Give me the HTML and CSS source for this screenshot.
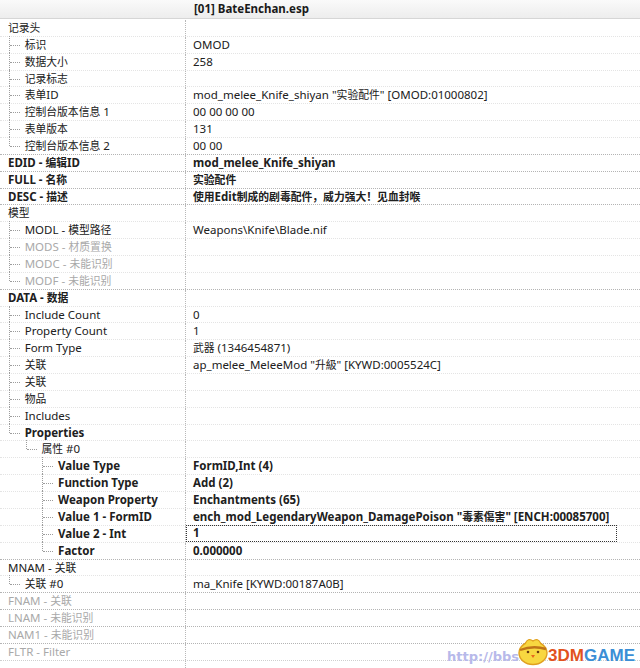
FILE: index.html
```html
<!DOCTYPE html>
<html>
<head>
<meta charset="utf-8">
<link rel="stylesheet" href="styles.css">
</head>
<body>
<div class="tree">
  <div class="hdr"><div class="hc"></div><div class="hc hv">[01] BateEnchan.esp</div></div>

  <div class="row"><div class="c"><span class="lbl"><span class="zh">记录头</span></span></div><div class="v"></div></div>
  <div class="row"><div class="c"><span class="g t"></span><span class="lbl"><span class="zh">标识</span></span></div><div class="v">OMOD</div></div>
  <div class="row"><div class="c"><span class="g t"></span><span class="lbl"><span class="zh">数据大小</span></span></div><div class="v">258</div></div>
  <div class="row"><div class="c"><span class="g t"></span><span class="lbl"><span class="zh">记录标志</span></span></div><div class="v"></div></div>
  <div class="row"><div class="c"><span class="g t"></span><span class="lbl"><span class="zh">表单</span>ID</span></div><div class="v">mod_melee_Knife_shiyan "<span class="zh">实验配件</span>" [OMOD:01000802]</div></div>
  <div class="row"><div class="c"><span class="g t"></span><span class="lbl"><span class="zh">控制台版本信息</span> 1</span></div><div class="v">00 00 00 00</div></div>
  <div class="row"><div class="c"><span class="g t"></span><span class="lbl"><span class="zh">表单版本</span></span></div><div class="v">131</div></div>
  <div class="row"><div class="c"><span class="g e"></span><span class="lbl"><span class="zh">控制台版本信息</span> 2</span></div><div class="v">00 00</div></div>

  <div class="row top b"><div class="c"><span class="lbl">EDID - <span class="zh">编辑</span>ID</span></div><div class="v">mod_melee_Knife_shiyan</div></div>
  <div class="row top b"><div class="c"><span class="lbl">FULL - <span class="zh">名称</span></span></div><div class="v"><span class="zh">实验配件</span></div></div>
  <div class="row top b"><div class="c"><span class="lbl">DESC - <span class="zh">描述</span></span></div><div class="v"><span class="zh">使用</span>Edit<span class="zh">制成的剧毒配件，威力强大！见血封喉</span></div></div>

  <div class="row top"><div class="c"><span class="lbl"><span class="zh">模型</span></span></div><div class="v"></div></div>
  <div class="row"><div class="c"><span class="g t"></span><span class="lbl">MODL - <span class="zh">模型路径</span></span></div><div class="v">Weapons\Knife\Blade.nif</div></div>
  <div class="row dim"><div class="c"><span class="g t"></span><span class="lbl">MODS - <span class="zh">材质置换</span></span></div><div class="v"></div></div>
  <div class="row dim"><div class="c"><span class="g t"></span><span class="lbl">MODC - <span class="zh">未能识别</span></span></div><div class="v"></div></div>
  <div class="row dim"><div class="c"><span class="g e"></span><span class="lbl">MODF - <span class="zh">未能识别</span></span></div><div class="v"></div></div>

  <div class="row top"><div class="c"><span class="lbl bl">DATA - <span class="zh">数据</span></span></div><div class="v"></div></div>
  <div class="row"><div class="c"><span class="g t"></span><span class="lbl">Include Count</span></div><div class="v">0</div></div>
  <div class="row"><div class="c"><span class="g t"></span><span class="lbl">Property Count</span></div><div class="v">1</div></div>
  <div class="row"><div class="c"><span class="g t"></span><span class="lbl">Form Type</span></div><div class="v"><span class="zh">武器</span>&nbsp;(1346454871)</div></div>
  <div class="row"><div class="c"><span class="g t"></span><span class="lbl"><span class="zh">关联</span></span></div><div class="v">ap_melee_MeleeMod "<span class="zh">升級</span>" [KYWD:0005524C]</div></div>
  <div class="row"><div class="c"><span class="g t"></span><span class="lbl"><span class="zh">关联</span></span></div><div class="v"></div></div>
  <div class="row"><div class="c"><span class="g t"></span><span class="lbl"><span class="zh">物品</span></span></div><div class="v"></div></div>
  <div class="row"><div class="c"><span class="g t"></span><span class="lbl">Includes</span></div><div class="v"></div></div>
  <div class="row"><div class="c"><span class="g e"></span><span class="lbl bl">Properties</span></div><div class="v"></div></div>
  <div class="row"><div class="c"><span class="g"></span><span class="g e"></span><span class="lbl"><span class="zh">属性</span> #0</span></div><div class="v"></div></div>
  <div class="row b"><div class="c"><span class="g"></span><span class="g"></span><span class="g t"></span><span class="lbl">Value Type</span></div><div class="v">FormID,Int (4)</div></div>
  <div class="row b"><div class="c"><span class="g"></span><span class="g"></span><span class="g t"></span><span class="lbl">Function Type</span></div><div class="v">Add (2)</div></div>
  <div class="row b"><div class="c"><span class="g"></span><span class="g"></span><span class="g t"></span><span class="lbl">Weapon Property</span></div><div class="v">Enchantments (65)</div></div>
  <div class="row b"><div class="c"><span class="g"></span><span class="g"></span><span class="g t"></span><span class="lbl">Value 1 - FormID</span></div><div class="v">ench_mod_LegendaryWeapon_DamagePoison "<span class="zh">毒素傷害</span>" [ENCH:00085700]</div></div>
  <div class="row b"><div class="c"><span class="g"></span><span class="g"></span><span class="g t"></span><span class="lbl">Value 2 - Int</span></div><div class="v"><span class="focus">1</span></div></div>
  <div class="row b"><div class="c"><span class="g"></span><span class="g"></span><span class="g e"></span><span class="lbl">Factor</span></div><div class="v">0.000000</div></div>

  <div class="row top"><div class="c"><span class="lbl">MNAM - <span class="zh">关联</span></span></div><div class="v"></div></div>
  <div class="row"><div class="c"><span class="g e"></span><span class="lbl"><span class="zh">关联</span> #0</span></div><div class="v">ma_Knife [KYWD:00187A0B]</div></div>
  <div class="row top dim"><div class="c"><span class="lbl">FNAM - <span class="zh">关联</span></span></div><div class="v"></div></div>
  <div class="row top dim"><div class="c"><span class="lbl">LNAM - <span class="zh">未能识别</span></span></div><div class="v"></div></div>
  <div class="row top dim"><div class="c"><span class="lbl">NAM1 - <span class="zh">未能识别</span></span></div><div class="v"></div></div>
  <div class="row top dim"><div class="c"><span class="lbl">FLTR - Filter</span></div><div class="v"></div></div>
  <div class="row rest"><div class="c"></div><div class="v"></div></div>
</div>

<div class="wm">
  <span class="wm-url">http://bbs</span>
  <svg class="wm-chick" width="32" height="31" viewBox="0 0 32 31">
    <ellipse cx="16" cy="18" rx="14" ry="11.5" fill="#f8d740" stroke="#e0a020" stroke-width="1.4"/>
    <path d="M8 9 Q11 2 16 6 Q21 2 24 9" fill="#f8d740" stroke="#e0a020" stroke-width="1.2"/>
    <path d="M3 15 Q16 10 29 14" stroke="#c07418" stroke-width="2.4" fill="none"/>
    <circle cx="11" cy="17" r="1.3" fill="#6b3a10"/>
    <circle cx="21" cy="17" r="1.3" fill="#6b3a10"/>
    <path d="M14 20 L18 20 L16 23 Z" fill="#e8691c"/>
  </svg>
  <span class="wm-3dm">3DM</span><span class="wm-game">GAME</span>
</div>
</body>
</html>
```

FILE: styles.css
```css
html, body {
  margin: 0;
  padding: 0;
  background: #ffffff;
}
body {
  font-family: "Noto Sans", "Noto Sans CJK SC", sans-serif;
  font-size: 11.5px;
  color: #202020;
  width: 640px;
  height: 668px;
  overflow: hidden;
  position: relative;
}
.zh {
  font-family: "Noto Sans CJK SC", sans-serif;
  font-size: 10.8px;
}
.tree {
  width: 640px;
  display: flex;
  flex-direction: column;
}
.hdr {
  display: grid;
  grid-template-columns: 186px 1fr;
  height: 19px;
  box-sizing: border-box;
  background: linear-gradient(#fafafa, #ededed);
  border-bottom: 1px solid #d6d6d6;
}
.hc {
  line-height: 18px;
  white-space: nowrap;
}
.hv {
  font-weight: 700;
  padding-left: 8px;
  color: #1a1a1a;
}
.row {
  display: grid;
  grid-template-columns: 186px 1fr;
  height: 16.86px;
  box-sizing: border-box;
  border-top: 1px dotted #e4e4e4;
  line-height: 15.8px;
  white-space: nowrap;
}
.row:nth-child(2) {
  border-top-color: transparent;
}
.row.top {
  border-top: 1px dotted #b4b4b4;
}
.row.rest {
  height: 10px;
  border-top: 1px dotted #cfcfcf;
}
.c {
  display: flex;
  align-items: stretch;
  border-right: 1px dotted #b8b8b8;
  overflow: visible;
}
.lbl {
  margin-left: 8px;
}
.v {
  padding-left: 7px;
  display: flex;
  align-items: stretch;
}
.v, .lbl {
  white-space: pre;
}
.b .c, .b .v, .bl {
  font-weight: 700;
}
.dim {
  color: #a9a9a9;
}
.g {
  flex: none;
  width: 16.7px;
  position: relative;
}
.g.t::before, .g.e::before {
  content: "";
  position: absolute;
  left: 9px;
  top: -1px;
  bottom: 0;
  border-left: 1px dotted #9c9c9c;
}
.g.e::before {
  bottom: 50%;
}
.g.t::after, .g.e::after {
  content: "";
  position: absolute;
  left: 10px;
  top: 50%;
  width: 10px;
  border-top: 1px dotted #9c9c9c;
}
.focus {
  flex: none;
  width: 431px;
  margin-left: -7px;
  padding-left: 6px;
  box-sizing: border-box;
  border: 1px dotted #333333;
  margin-top: -1px;
  height: 16.86px;
  line-height: 14.8px;
}
.wm {
  position: absolute;
  right: 5px;
  bottom: 4px;
  display: flex;
  align-items: flex-end;
  height: 31px;
}
.wm-url {
  font-family: "DejaVu Sans", sans-serif;
  font-weight: 700;
  font-size: 13px;
  color: #b7b9ea;
  margin-right: -2px;
  line-height: 15px;
}
.wm-chick {
  display: block;
  margin-bottom: -2px;
  margin-right: -1px;
}
.wm-3dm, .wm-game {
  font-family: "Liberation Sans", sans-serif;
  font-weight: 700;
  font-size: 17px;
  line-height: 17px;
}
.wm-3dm {
  color: #e2521d;
}
.wm-game {
  color: #3b8fd6;
}
```
